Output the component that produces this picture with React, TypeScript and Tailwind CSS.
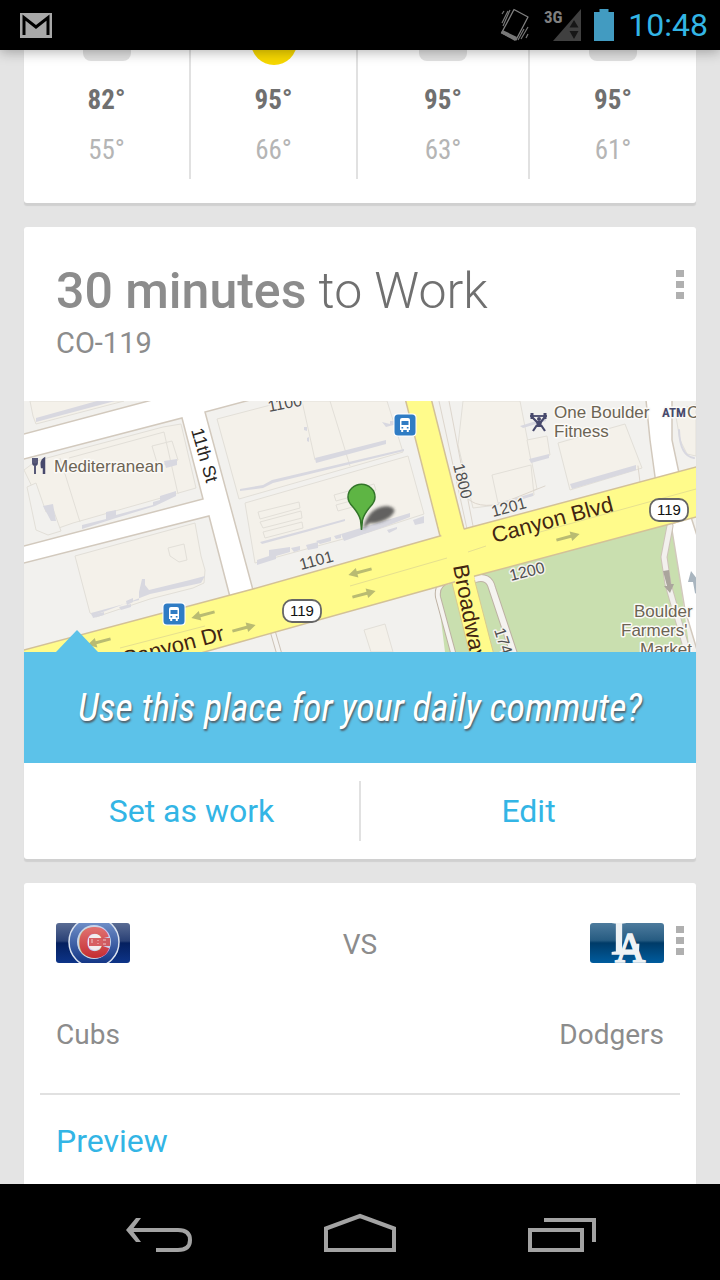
import type { ReactNode } from "react";

const label = { fontFamily: '"Liberation Sans", Arial, sans-serif' };

function StatusBar() {
  return (
    <header className="relative z-10 flex h-[50px] shrink-0 items-center justify-between bg-black pl-5 pr-3 shadow-[0_2px_12px_rgba(0,0,0,0.3)]">
      <svg width="32" height="25" viewBox="0 0 32 25" role="img" aria-label="Gmail">
        <rect width="32" height="25" fill="#a8a8a8" />
        <path d="M4 22V4.500L16 14L28 4.500V22" fill="none" stroke="#000" strokeWidth="3" />
      </svg>
      <div className="flex items-center">
        <svg width="30" height="36" viewBox="0 0 30 36" fill="none" aria-hidden="true">
          <path d="M14 2.500L28 10L16 33L1.500 26Z" stroke="#808080" strokeWidth="1.300" strokeLinejoin="round" />
          <path d="M1 26L2.500 23L17 30L15 34Z" fill="#777" />
          <path d="M2 7l2-3M2 16L8 4M3 19L10 3M18 33L24 22M21 32L28 20M26 31l2-4" stroke="#777" strokeWidth="1.200" />
        </svg>
        <svg className="ml-3" width="40" height="34" viewBox="0 0 40 34" aria-hidden="true">
          <path d="M39 1V33H11Z" fill="#404040" />
          <path d="M27.500 19.500L32 12L36.500 19.500ZM27.500 23H36.500L32 31Z" fill="#161616" />
          <text x="2" y="15" fill="#808080" fontSize="17" fontWeight="700" fontFamily="'Roboto Condensed', 'Roboto', sans-serif">3G</text>
        </svg>
        <svg className="ml-3" width="20" height="32" viewBox="0 0 20 32" aria-hidden="true">
          <path d="M0 3H5.500V0H14.500V3H20V32H0Z" fill="#429bc1" />
        </svg>
        <time className="ml-3.5 text-[32px] leading-10 text-[#33b5e5]">10:48</time>
      </div>
    </header>
  );
}

const days = [
  { high: "82°", low: "55°", sun: false },
  { high: "95°", low: "66°", sun: true },
  { high: "95°", low: "63°", sun: false },
  { high: "95°", low: "61°", sun: false },
];

function Card({ children, top = false }: { children: ReactNode; top?: boolean }) {
  return (
    <section className={`${top ? "rounded-b-[3px]" : "rounded-[3px]"} shrink-0 bg-white shadow-[0_3px_1px_#d0d0d0]`}>
      {children}
    </section>
  );
}

function Weather() {
  return (
    <Card top>
      <div className="grid grid-cols-[167fr_167fr_172fr_166fr] pb-6">
        {days.map((day, i) => (
          <div
            key={i}
            className={`flex h-[129px] flex-col items-center font-['Roboto_Condensed','Roboto',sans-serif] text-[27px] ${i < 3 ? "border-r-2 border-[#e1e1e1]" : ""}`}
          >
            <div className="flex h-4 items-start justify-center overflow-hidden">
              {day.sun ? (
                <svg width="48" height="16" viewBox="0 0 48 16" aria-hidden="true">
                  <circle cx="24" cy="-8" r="23" fill="#f7d800" />
                </svg>
              ) : (
                <svg width="48" height="16" viewBox="0 0 48 16" aria-hidden="true">
                  <rect y="-20" width="48" height="31" rx="8" fill="#e1e1e1" />
                </svg>
              )}
            </div>
            <span className="mt-4 leading-9 font-bold text-[#707070]">{day.high}</span>
            <span className="mt-3 leading-10 font-normal text-[#b5b5b5]">{day.low}</span>
          </div>
        ))}
      </div>
    </Card>
  );
}

function MenuButton() {
  return (
    <button type="button" aria-label="Card menu" className="flex h-[31px] w-4 cursor-pointer items-center justify-center">
      <svg width="8" height="31" viewBox="0 0 8 31" fill="#b0b0b0" aria-hidden="true">
        <path d="M0 1h8v7H0zM0 12h8v7H0zM0 23h8v7H0z" />
      </svg>
    </button>
  );
}

function Arrow({ x, y, left = false }: { x: number; y: number; left?: boolean }) {
  return (
    <g transform={`translate(${x} ${y}) rotate(${left ? 165 : -15})`} fill="#b9bb72">
      <path d="M-12 -1.500H3V-5L12 0L3 5V1.500H-12Z" />
    </g>
  );
}

function Shield({ x, y }: { x: number; y: number }) {
  return (
    <g>
      <rect x={x - 19} y={y - 11} width="38" height="22" rx="9" fill="#fff" stroke="#666" strokeWidth="1.800" />
      <text x={x} y={y + 5} textAnchor="middle" fontSize="15" fill="#111">119</text>
    </g>
  );
}

function BusStop({ x, y }: { x: number; y: number }) {
  return (
    <g transform={`translate(${x} ${y})`}>
      <rect x="-11.500" y="-11.500" width="23" height="23" rx="4" fill="#fff" />
      <rect x="-10.500" y="-10.500" width="21" height="21" rx="3.500" fill="#2f7cc4" />
      <path d="M-5 -5Q-5 -7 -3 -7H3Q5 -7 5 -5V5H3.800V7H1.800V5H-1.800V7H-3.800V5H-5Z" fill="#fff" />
      <path d="M-3.500 -4H3.500V0H-3.500ZM-3.500 2H-1.800V3.500H-3.500ZM1.800 2H3.500V3.500H1.800Z" fill="#2f7cc4" />
    </g>
  );
}

function TrafficMap() {
  return (
    <svg
      className="block h-[251px] w-full"
      viewBox="24 401 672 251"
      preserveAspectRatio="xMidYMid slice"
      style={label}
      role="img"
      aria-label="Map of Canyon Blvd and Broadway"
    >
      <defs>
        <filter id="soft" x="-50%" y="-50%" width="200%" height="200%">
          <feGaussianBlur stdDeviation="1.500" />
        </filter>
      </defs>
      <rect x="24" y="401" width="672" height="251" fill="#f2f1ee" />

      {/* parks */}
      <path d="M437 588L475 576L672 522L690 652H445Z" fill="#c9dfaf" />

      {/* buildings */}
      <g fill="#f4f1ea" stroke="#e2dfd8" strokeWidth="1">
        <path d="M30 401H124L36 424L33 416Z" />
        <path d="M36 461L69 452L163 427L181 424L196 488L175 494L73 523L53 530L24 470Z" />
        <path d="M69 458L164 432L178 494M152 446L172 441L178 460L158 466ZM60 458L80 522" />
        <path d="M27 487L36 483L46 512L53 509L61 531L48 535L36 530Z" fill="#f2f1ee" />
        <path d="M75 556L195 523L201 556L205 570L204 583L193 588L150 599L96 617L90 613Z" />
        <path d="M168 548L184 544L187 560L179 562L170 556Z" fill="none" />
        <path d="M217 419L286 401H387L403 452L239 499Z" />
        <path d="M302 401L315 460M330 401L350 466" fill="none" />
        <path d="M245 503L408 456L424 514L369 532L255 563Z" />
        <path d="M258 512L299 502L300 508L260 519ZM260 522L301 511L302 518L263 528ZM263 532L302 522L303 528L265 538ZM334 495L374 484L376 490L336 501ZM336 505L369 496L371 502L338 511Z" />
        <path d="M463 401H520L537 489L497 505L473 508L458 445Z" />
        <path d="M492 475L531 465L534 495L498 503ZM527 440L547 436L550 455L531 461Z" />
        <path d="M558 443L625 424L642 468L570 490Z" />
        <path d="M364 630L385 624L393 652H371Z" />
        <path d="M675 411L696 404V456L687 454L680 440Z" />
      </g>
      <g fill="#d8d8e0">
        <path d="M36 418L97 401H115L36 422Z" />
        <path d="M82 525L106 519V512L116 510V515L153 505V502L160 500V496L176 491V496L155 506L116 518L82 529ZM164 461L177 459V465L166 468ZM43 506L53 504L56 521H51Z" />
        <path d="M91 613L139 600V592L142 579H145V585L149 590L190 580L205 576L201 583L150 594L119 606L92 616Z" />
        <path d="M92 615L104 612V615L93 618ZM119 607L131 604V607L121 610ZM126 601L133 598V602L127 605Z" />
        <path d="M315 458L386 440V444L316 463ZM240 489L263 485L272 480L404 449V451L273 483L263 488L240 491ZM382 422L390 424V421H397V424L386 427ZM304 427L307 427V431L304 430ZM307 438L309 437V442L307 441Z" />
        <path d="M260 542L305 530L345 519V521L306 532L262 544ZM269 550L290 547V552L276 556V559L257 565V560L269 556ZM291 548L300 546V550L294 552ZM306 545L318 542V548L308 550ZM316 541L331 537V541L320 544ZM334 536L341 534V538L336 539ZM341 534L410 513V517L384 527L344 541ZM387 530L397 527V529L389 533ZM413 520L424 516V523L415 525Z" />
        <path d="M570 484L636 465V470L572 489ZM498 503L533 493V496L500 506ZM520 426L546 418V421L523 428ZM529 459L549 454V458L531 463Z" />
      </g>

      {/* side streets */}
      <g fill="#fff" stroke="#d2c9bd" strokeWidth="1.500">
        <path d="M20 435L152 400H250L205 412L253 590L230 597L209 516L20 564V547L203 499L182 418L20 460Z" />
        <path d="M646 400L650 440L656 484L679 473L672 440V400Z" />
        <path d="M671 524L691 517L700 545V660L685 610Z" />
      </g>

      {/* service roads */}
      <g fill="none" strokeLinecap="round">
        <path d="M451 580Q436 583 438 597L454 656" stroke="#bdb1a3" strokeWidth="6" />
        <path d="M451 580Q436 583 438 597L454 656" stroke="#f5f3f0" strokeWidth="4" />
        <path d="M475 579Q489 575 492 588L514 654" stroke="#bdb1a3" strokeWidth="8" />
        <path d="M475 579Q489 575 492 588L514 654" stroke="#f5f3f0" strokeWidth="6" />
        <path d="M670 526L664 557L668 584L688 654" stroke="#cdc3b8" strokeWidth="7" />
        <path d="M670 526L664 557L668 584L688 654" stroke="#f2f0ed" strokeWidth="5" />
        <path d="M272 629L279 653" stroke="#cdc3b8" strokeWidth="6" />
        <path d="M272 629L279 653" stroke="#f5f3f0" strokeWidth="4" />
        <path d="M439 401L467 529M449 401L473 526" stroke="#ddd6cd" strokeWidth="1" />
        <path d="M462 490Q470 510 500 504L545 486M638 466L640 482" stroke="#ddd6cd" strokeWidth="1" />
        <path d="M679 430Q680 456 694 458" stroke="#d8d8e0" strokeWidth="2" />
      </g>

      {/* main roads */}
      <path d="M405 398L440 536L464 529L431 398Z" fill="#fffb8b" stroke="#d3c197" strokeWidth="1.500" />
      <path d="M450 575L470 655H494L472 570Z" fill="#fffb8b" stroke="#d8ca8f" strokeWidth="1" />
      <path d="M20 651L253 589L440 536L464 529L700 466V516L670 524L475 576L437 587L240 642L190 656H20Z" fill="#fffb8b" stroke="#d3c197" strokeWidth="1.500" />
      <path d="M438 524L442 538L465 532L461 524ZM452 568L456 586L475 580L471 565Z" fill="#fffb8b" />
      <path d="M120 648L205 626M350 586L447 558M468 552L486 546M540 532L696 489" fill="none" stroke="#e6e08f" strokeWidth="1" />

      <Arrow x={203} y={615} left />
      <Arrow x={99} y={642} left />
      <Arrow x={244} y={628} />
      <Arrow x={360} y={572} left />
      <Arrow x={364} y={594} />
      <Arrow x={568} y={537} />
      <path d="M663 571L669 570L671 584H674L670 593L664 586H667Z" fill="#aaa59c" />
      <path d="M691 571L698 580V595L695 593L693 582H688Z" fill="#a9b5bf" />

      {/* street names */}
      <g fill="#505050" fontSize="16" stroke="#f4f2ed" strokeWidth="3" strokeLinejoin="round" paintOrder="stroke">
        <text transform="translate(269 412) rotate(-11)">1100</text>
        <text transform="translate(301 570) rotate(-15)">1101</text>
        <text transform="translate(453 465) rotate(76)">1800</text>
        <text transform="translate(493 517) rotate(-15)">1201</text>
        <text transform="translate(511 581) rotate(-14)">1200</text>
        <text transform="translate(494 630) rotate(72)">1749</text>
      </g>
      <text transform="translate(191 430) rotate(74)" fontSize="18" fill="#292522">11th St</text>
      <g fontSize="22" fill="#422511">
        <text transform="translate(494 543) rotate(-15)">Canyon Blvd</text>
        <text transform="translate(124 667) rotate(-15)">Canyon Dr</text>
        <text transform="translate(453 566) rotate(79)">Broadway</text>
      </g>

      {/* places */}
      <g fill="#6c6454" fontSize="17" stroke="#fbfaf7" strokeWidth="3" strokeLinejoin="round" paintOrder="stroke">
        <text x="54" y="472">Mediterranean</text>
        <text x="554" y="418">One Boulder</text>
        <text x="554" y="437">Fitness</text>
        <text x="687" y="418">C</text>
        <text x="634" y="617">Boulder</text>
        <text x="621" y="636">Farmers'</text>
        <text x="640" y="655">Market</text>
        <text x="662" y="417" fontSize="13" fontWeight="700" fill="#47496c" fontFamily="'Roboto Condensed', 'Roboto', sans-serif">ATM</text>
      </g>
      <g stroke="#47496c" fill="none">
        <path d="M33 458V463Q33 465 35 465Q37 465 37 463V458M35 458V474" strokeWidth="1.800" />
        <path d="M44 474V459Q41 461 42 467H44" fill="#47496c" strokeWidth="2.500" />
        <path d="M530 416H547" strokeWidth="1.800" />
        <path d="M532 413V419M545 413V419" strokeWidth="3" />
        <path d="M532 417L538 423M545 417L540 423M537 425L533 431M541 425L545 431" strokeWidth="2.200" />
        <path d="M536 421H542L541 427H537Z" fill="#47496c" strokeWidth="0" />
        <circle cx="539" cy="419" r="2" fill="#47496c" strokeWidth="0" />
      </g>

      <BusStop x={405} y={425} />
      <BusStop x={174} y={614} />
      <Shield x={302} y={611} />
      <Shield x={669} y={510} />

      {/* destination pin */}
      <path d="M363 529Q368 507 387 506Q400 508 390 517Q380 524 370 523Z" fill="#333" opacity=".75" filter="url(#soft)" />
      <path d="M361.500 530L360.500 520Q359 514 353 507Q348 502 348 497A13.300 12.500 0 0 1 375 497Q375 502 370 507Q364 514 362.500 520Z" fill="#5eb544" stroke="#33752a" strokeWidth="1.500" />
    </svg>
  );
}

function Commute() {
  return (
    <Card>
      <div className="flex h-[174px] justify-between pl-8 pr-2 pt-[34px]">
        <div>
          <h1 className="text-[50px] leading-[60px] font-light text-[#707070]">
            <span className="font-medium text-[#8c8c8c]">30 minutes</span> to Work
          </h1>
          <p className="mt-1 text-[29px] leading-9 text-[#8c8c8c]">CO-119</p>
        </div>
        <div className="pt-2">
          <MenuButton />
        </div>
      </div>
      <TrafficMap />
      <div className="relative flex h-[111px] items-center justify-center bg-[#5cc2e9]">
        <svg className="absolute bottom-full left-8" width="42" height="22" viewBox="0 0 42 22" aria-hidden="true">
          <path d="M0 22L21 0L42 22Z" fill="#5cc2e9" />
        </svg>
        <p className="font-['Roboto_Condensed','Roboto',sans-serif] text-[38px] leading-[44px] text-white italic [text-shadow:1px_2px_2px_#50606a]">
          Use this place for your daily commute?
        </p>
      </div>
      <div className="flex h-24 items-center text-[32px] leading-10 text-[#33b5e5]">
        <button type="button" className="h-[60px] flex-1 cursor-pointer border-r-2 border-[#e1e1e1]">Set as work</button>
        <button type="button" className="h-[60px] flex-1 cursor-pointer">Edit</button>
      </div>
    </Card>
  );
}

function CubsLogo() {
  return (
    <svg width="74" height="40" viewBox="0 0 74 40" role="img" aria-label="Cubs logo" style={label}>
      <defs>
        <linearGradient id="cubs" x2="0" y2="1">
          <stop offset="0" stopColor="#5a6c94" />
          <stop offset=".45" stopColor="#2a4176" />
          <stop offset=".5" stopColor="#05205f" />
          <stop offset="1" stopColor="#0d3488" />
        </linearGradient>
        <linearGradient id="cubsDisc" x2="0" y2="1">
          <stop offset="0" stopColor="#7b9ad0" />
          <stop offset="1" stopColor="#0b2e80" />
        </linearGradient>
        <linearGradient id="cubsRed" x2="0" y2="1">
          <stop offset="0" stopColor="#e88581" />
          <stop offset="1" stopColor="#bd1b22" />
        </linearGradient>
        <clipPath id="cubsClip"><rect width="74" height="40" rx="3" /></clipPath>
      </defs>
      <g clipPath="url(#cubsClip)">
        <rect width="74" height="40" fill="url(#cubs)" />
        <circle cx="38" cy="19" r="25" fill="url(#cubsDisc)" stroke="#dbe3ef" strokeWidth="1.500" />
        <circle cx="38" cy="19" r="17" fill="#c9d5ea" />
        <circle cx="39" cy="19" r="8" fill="#f3eeee" />
        <text x="38" y="34" textAnchor="middle" fontSize="42" fontWeight="700" fill="url(#cubsRed)" stroke="url(#cubsRed)" strokeWidth="2">C</text>
        <path d="M33 15h21v8H33z" fill="#cf3c3e" opacity=".8" />
        <path d="M36 16v4M42 17v1M42 20v1M47 17h3M47 21h3" fill="none" stroke="#f0c9c8" strokeWidth="1" />
      </g>
    </svg>
  );
}

function DodgersLogo() {
  return (
    <svg width="74" height="40" viewBox="0 0 74 40" role="img" aria-label="Dodgers logo">
      <defs>
        <linearGradient id="la" x2="0" y2="1">
          <stop offset="0" stopColor="#4d7b9d" />
          <stop offset=".43" stopColor="#275c82" />
          <stop offset=".5" stopColor="#003b68" />
          <stop offset="1" stopColor="#005c9e" />
        </linearGradient>
        <clipPath id="laClip"><rect width="74" height="40" rx="3" /></clipPath>
      </defs>
      <g clipPath="url(#laClip)">
        <rect width="74" height="40" fill="url(#la)" />
        <g fontFamily="'Liberation Serif', serif" fill="#eef2f5" stroke="#eef2f5" strokeWidth="1.500">
          <text x="21" y="31" fontSize="50">L</text>
          <text x="25" y="39" fontSize="42">A</text>
        </g>
      </g>
    </svg>
  );
}

function Game() {
  return (
    <Card>
      <div className="flex items-start pl-8 pr-2 pt-10 text-[#8c8c8c]">
        <CubsLogo />
        <span className="flex-1 pt-0.5 text-center text-[28px] leading-10">VS</span>
        <DodgersLogo />
        <div className="ml-2 pt-0.5">
          <MenuButton />
        </div>
      </div>
      <div className="mt-[52px] flex justify-between px-8 text-[28px] leading-9 text-[#8c8c8c]">
        <span>Cubs</span>
        <span>Dodgers</span>
      </div>
      <div className="mx-4 mt-10 h-[108px] border-t-2 border-[#e1e1e1] px-4 pt-[26px]">
        <a href="#preview" className="text-[32px] leading-10 text-[#33b5e5]">Preview</a>
      </div>
    </Card>
  );
}

function NavigationBar() {
  return (
    <nav className="relative z-10 grid h-24 shrink-0 grid-cols-[1fr_200px_1fr] bg-black">
      <button type="button" aria-label="Back" className="flex cursor-pointer items-center justify-end pr-[66px]">
        <svg width="68" height="40" viewBox="0 0 68 40" fill="none" stroke="#a3a3a3" strokeWidth="4" aria-hidden="true">
          <path d="M5 18H52Q64 18 64 28T52 38H30" />
          <path d="M10 6H15L6 18L15 30H10L0 18Z" fill="#a3a3a3" stroke="none" />
        </svg>
      </button>
      <button type="button" aria-label="Home" className="flex cursor-pointer items-center justify-center">
        <svg width="72" height="40" viewBox="0 0 72 40" fill="none" stroke="#a3a3a3" strokeWidth="4" aria-hidden="true">
          <path d="M2 16.500L36 4L70 16.500V38H2Z" />
        </svg>
      </button>
      <button type="button" aria-label="Recent apps" className="flex cursor-pointer items-center pl-[68px]">
        <svg width="68" height="40" viewBox="0 0 68 40" fill="none" stroke="#a3a3a3" strokeWidth="4" aria-hidden="true">
          <path d="M2 18H54V38H2ZM16 8H66V30" />
        </svg>
      </button>
    </nav>
  );
}

export default function App() {
  return (
    <div className="flex h-screen flex-col bg-[#e4e4e4] font-['Roboto',sans-serif]">
      <StatusBar />
      <main className="flex min-h-0 flex-1 flex-col gap-6 overflow-hidden px-6">
        <Weather />
        <Commute />
        <Game />
      </main>
      <NavigationBar />
    </div>
  );
}
